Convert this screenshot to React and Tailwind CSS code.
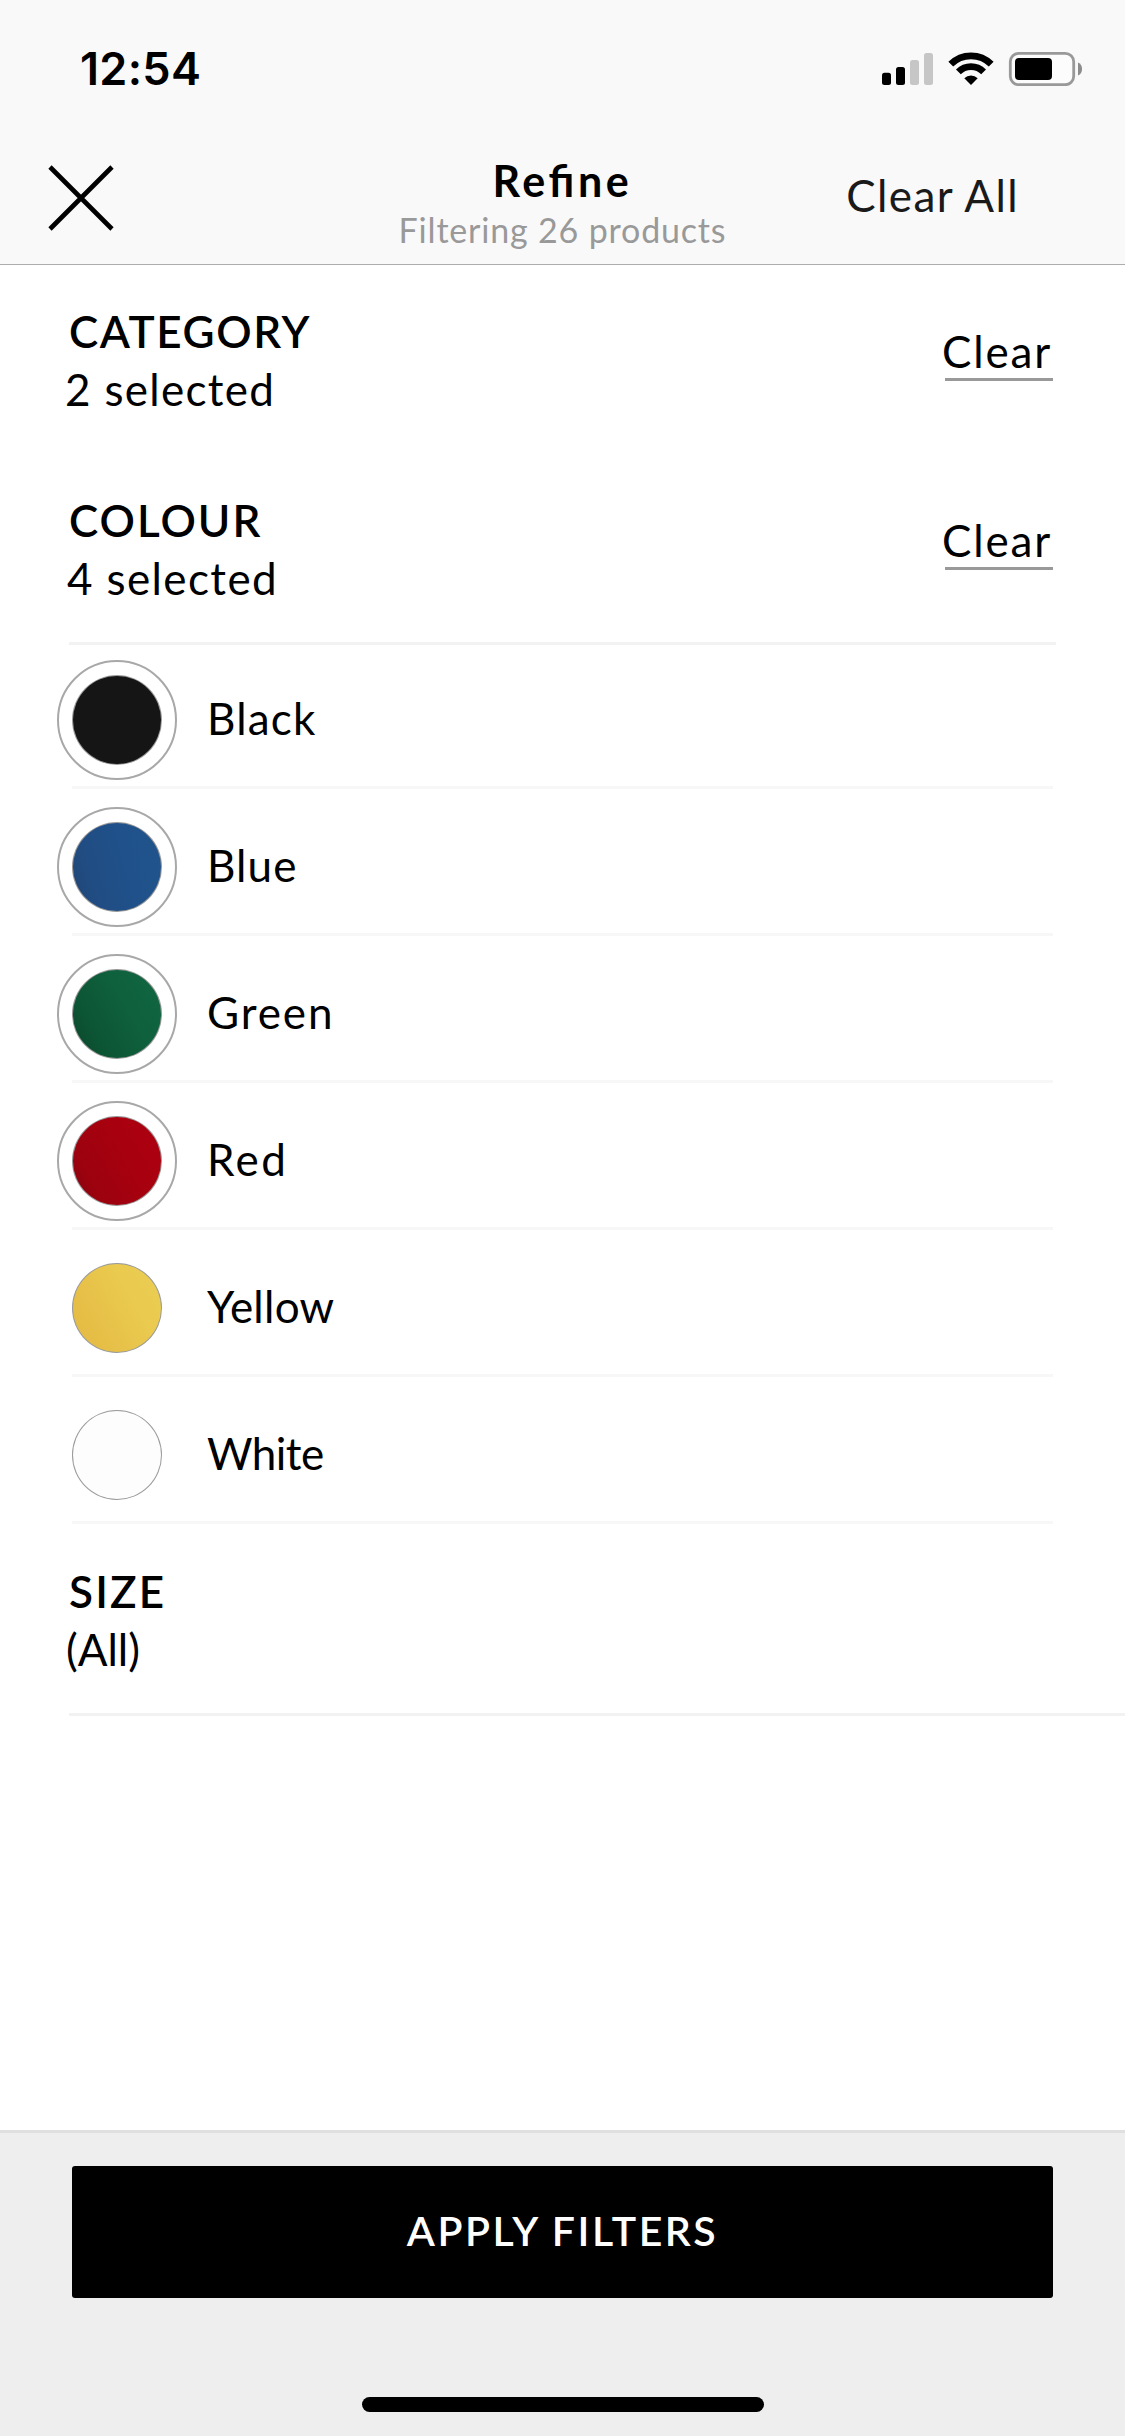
const colours = [
  { name: "Black", selected: true, fill: "bg-[#151515]", text: "tracking-[1.2px] ml-[30px]" },
  { name: "Blue", selected: true, fill: "bg-[linear-gradient(75deg,#23436f_0%,#204c82_20%,#20518a_60%,#21548c_100%)]", text: "tracking-[1.1px] ml-[30px]" },
  { name: "Green", selected: true, fill: "bg-[linear-gradient(60deg,#0b4429_0%,#0c5534_25%,#0f603d_60%,#116742_100%)]", text: "tracking-[1.9px] ml-[30px]" },
  { name: "Red", selected: true, fill: "bg-[linear-gradient(60deg,#7c0510_0%,#9c020e_22%,#a8000f_60%,#ae0010_100%)]", text: "tracking-[2.4px] ml-[30px]" },
  { name: "Yellow", selected: false, fill: "bg-[linear-gradient(60deg,#e4b942_0%,#e7c149_35%,#eaca4f_65%,#ebce54_100%)]", text: "tracking-[0.25px] ml-[30px]" },
  { name: "White", selected: false, fill: "bg-[#fdfdfd]", text: "tracking-[-0.55px] ml-[30px]" },
];

function StatusBar() {
  return (
    <div className="flex h-[132px] items-start justify-between pl-[80px] pr-[42px] pt-[45px]">
      <span className="font-[Inter,sans-serif] text-[45px] font-semibold leading-[48px] tracking-[0.3px]">12:54</span>
      <svg className="mt-[5px] h-9 w-[202px]" viewBox="881 50 202 36" fill="none">
        <rect x="882" y="72.7" width="9" height="12.3" rx="2.5" fill="#000" />
        <rect x="896" y="67" width="9" height="18" rx="2.5" fill="#000" />
        <rect x="910" y="60" width="9" height="25" rx="2.5" fill="#c6c6c6" />
        <rect x="924" y="53" width="9" height="32" rx="2.5" fill="#c6c6c6" />
        <path d="M950.8 64.2A28.6 28.6 0 0 1 991.2 64.2" stroke="#000" strokeWidth="6.8" />
        <path d="M958.4 71.9A17.8 17.8 0 0 1 983.6 71.9" stroke="#000" strokeWidth="6.8" />
        <path d="M971 85L964.3 78.3A9.6 9.6 0 0 1 977.7 78.3Z" fill="#000" />
        <rect x="1010.3" y="53.3" width="63.4" height="31.4" rx="8.5" fill="#fcfcfc" stroke="#999" strokeWidth="2.8" />
        <rect x="1015" y="58" width="37" height="22" rx="4" fill="#000" />
        <path d="M1078 62.500C1083.400 64.500 1083.400 73.500 1078 75.500Z" fill="#8c8c8c" />
      </svg>
    </div>
  );
}

function Header() {
  return (
    <header className="h-[265px] border-b border-[#adadad] bg-[#f9f9f9]">
      <StatusBar />
      <div className="grid grid-cols-[1fr_auto_1fr] items-start">
        <button className="ml-[49px] mt-[34px] w-16">
          <svg className="size-16 overflow-visible" viewBox="0 0 64 64" stroke="#000" strokeWidth="4.6">
            <path d="M1 1L63 63M63 1L1 63" />
          </svg>
        </button>
        <div className="mt-[22px] flex flex-col items-center">
          <h1 className="text-[43px] font-bold leading-[54px] tracking-[3.6px] [font-feature-settings:'liga'_1]">Refine</h1>
          <p className="text-[34px] leading-[43px] tracking-[0.82px] text-[#999]">Filtering 26 products</p>
        </div>
        <button className="mr-[106px] mt-[39px] justify-self-end whitespace-nowrap leading-[48px] tracking-[1.4px] text-[#1a1a1a]">Clear All</button>
      </div>
    </header>
  );
}

function Section({ title, titleClass, detail, detailClass, clearable, className }) {
  return (
    <section className={`flex items-start justify-between pr-[72px] ${className}`}>
      <div className="mt-px leading-[58px]">
        <h2 className={`font-semibold ${titleClass}`}>{title}</h2>
        <p className={detailClass}>{detail}</p>
      </div>
      {clearable && (
        <button className="mt-[26px] flex h-[54px] w-[108px] items-start border-b-[3px] border-[#999] text-left leading-[48px]">
          <span className="-ml-[3px] block whitespace-nowrap tracking-[1.86px]">Clear</span>
        </button>
      )}
    </section>
  );
}

function Swatch({ selected, fill }) {
  return (
    <div className={`flex size-[120px] shrink-0 items-center justify-center rounded-full border-2 ${selected ? "border-[#a8a8a8]" : "border-transparent"}`}>
      <div className="size-[90px] rounded-full bg-[#9a9a9a] p-px">
        <div className={`size-full rounded-full ${fill}`} />
      </div>
    </div>
  );
}

export default function App() {
  return (
    <div className="flex h-[2436px] w-[1125px] flex-col bg-white font-[Lato,sans-serif] text-[44px] text-black">
      <Header />
      <main className="flex-1">
        <Section title="CATEGORY" titleClass="ml-[69px] tracking-[1.6px]" detail="2 selected" detailClass="ml-[65px] tracking-[1.3px]" clearable className="h-[189px] pt-9" />
        <Section title="COLOUR" titleClass="ml-[69px] tracking-[2px]" detail="4 selected" detailClass="ml-[67px] tracking-[1.38px]" clearable className="h-[188px] pt-9" />
        <ul className="ml-[69px] mr-[69px] border-t-[3px] border-[#f2f2f2] px-[3px]">
          {colours.map((c, i) => (
            <li key={c.name} className={`flex items-end border-b-[3px] border-[#f7f7f7] pb-[6px] ${i === 0 ? "h-[144px]" : "h-[147px]"}`}>
              <div className="-ml-[15px] flex items-center">
                <Swatch selected={c.selected} fill={c.fill} />
                <span className={`mb-1 leading-[54px] ${c.text}`}>{c.name}</span>
              </div>
            </li>
          ))}
        </ul>
        <Section title="SIZE" titleClass="ml-[69px] tracking-[2.14px]" detail="(All)" detailClass="ml-[66px] tracking-[0px]" className="h-[189px] pt-[37px]" />
        <div className="ml-[69px] h-[3px] bg-[#f2f2f2]" />
      </main>
      <footer className="flex h-[306px] flex-col items-center justify-between border-t-[3px] border-[#e0e0e0] bg-[#eee] pb-6 pt-[33px]">
        <button className="h-[132px] w-[981px] rounded-[3px] bg-black pb-[3px] text-[41px] font-semibold leading-[48px] tracking-[2.5px] text-white">APPLY FILTERS</button>
        <div className="h-[15px] w-[402px] rounded-full bg-black" />
      </footer>
    </div>
  );
}
